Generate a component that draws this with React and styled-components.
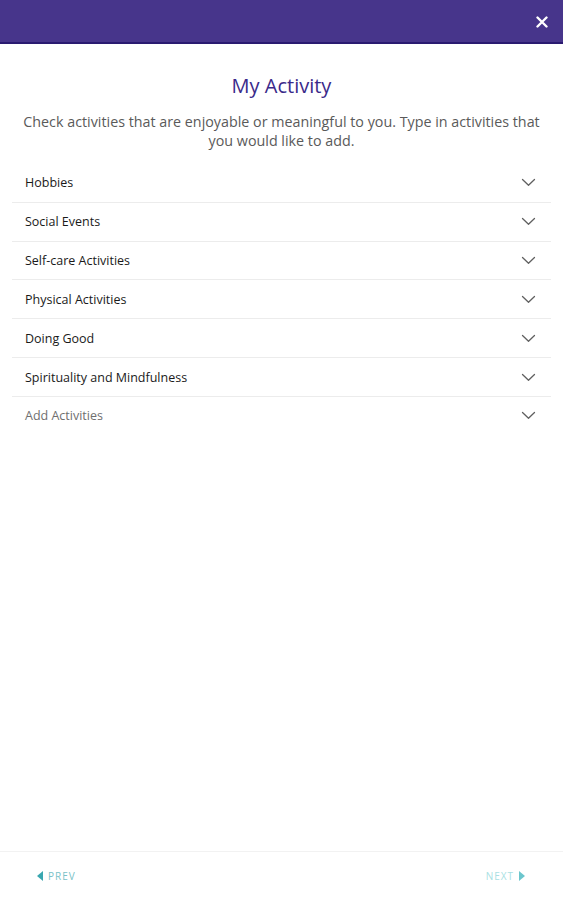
import React from 'react'
import styled, { createGlobalStyle } from 'styled-components'

const GlobalStyle = createGlobalStyle`
  html, body {
    margin: 0;
    padding: 0;
    background: #fff;
    font-family: "Open Sans", "Noto Sans", sans-serif;
  }
`

const categories = [
  'Hobbies',
  'Social Events',
  'Self-care Activities',
  'Physical Activities',
  'Doing Good',
  'Spirituality and Mindfulness',
]

const Chevron = () => (
  <svg width="15" height="9" viewBox="0 0 15 9" fill="none">
    <path d="M1.5 1.5 L7.5 7.3 L13.5 1.5" stroke="#606060" strokeWidth="1.3" strokeLinecap="round" strokeLinejoin="round" />
  </svg>
)

const CloseIcon = () => (
  <svg width="12" height="12" viewBox="0 0 12 12">
    <path d="M1.5 1.5 L10.5 10.5 M10.5 1.5 L1.5 10.5" stroke="#fff" strokeWidth="2.4" strokeLinecap="round" />
  </svg>
)

export default function App() {
  return (
    <Page>
      <GlobalStyle />
      <Header>
        <CloseButton aria-label="close"><CloseIcon /></CloseButton>
      </Header>
      <Main>
        <Title>My Activity</Title>
        <Intro>
          Check activities that are enjoyable or meaningful to you. Type in activities that you would like to add.
        </Intro>
        <List>
          {categories.map((name) => (
            <Row key={name}>
              <RowLabel>{name}</RowLabel>
              <Chevron />
            </Row>
          ))}
          <Row last>
            <RowLabel muted>Add Activities</RowLabel>
            <Chevron />
          </Row>
        </List>
      </Main>
      <Footer>
        <NavButton>
          <Arrow left />
          PREV
        </NavButton>
        <NavButton faded>
          NEXT
          <Arrow />
        </NavButton>
      </Footer>
    </Page>
  )
}

const Page = styled.div`
  display: flex;
  flex-direction: column;
  min-height: 100vh;
`

const Header = styled.header`
  display: flex;
  align-items: center;
  justify-content: flex-end;
  height: 42px;
  background-color: #47358b;
  border-bottom: 2px solid #2a1a70;
  padding: 0 14px;
`

const CloseButton = styled.button`
  display: flex;
  align-items: center;
  justify-content: center;
  background: none;
  border: none;
  padding: 0;
  margin-right: 1px;
  margin-top: 1px;
  cursor: pointer;
`

const Main = styled.main`
  flex: 1;
  display: flex;
  flex-direction: column;
  align-items: center;
  padding-top: 28px;
`

const Title = styled.h1`
  margin: 0;
  font-size: 20px;
  font-weight: 400;
  line-height: 28px;
  color: #3a2a8a;
`

const Intro = styled.p`
  margin: 12px 0 0;
  width: 530px;
  font-size: 14.3px;
  line-height: 19px;
  text-align: center;
  color: #5a5a5a;
`

const List = styled.div`
  align-self: stretch;
  display: flex;
  flex-direction: column;
  margin: 14px 12px 0;
`

const Row = styled.div`
  display: flex;
  align-items: center;
  justify-content: space-between;
  height: 37.83px;
  padding: 0 15px 0 13px;
  border-bottom: 1px solid ${(props) => (props.last ? 'transparent' : '#ececec')};
`

const RowLabel = styled.span`
  font-size: 12.5px;
  color: ${(props) => (props.muted ? '#6f6f6f' : '#1a1a1a')};
`

const Footer = styled.footer`
  display: flex;
  align-items: center;
  justify-content: space-between;
  height: 48px;
  padding: 0 38px 0 37px;
  border-top: 1px solid #f2f2f2;
`

const NavButton = styled.span`
  display: flex;
  align-items: center;
  gap: 5px;
  font-size: 10px;
  letter-spacing: 1px;
  color: ${(props) => (props.faded ? '#a9dfe3' : '#79c2c8')};
`

const Arrow = styled.span`
  width: 0;
  height: 0;
  border-top: 5px solid transparent;
  border-bottom: 5px solid transparent;
  ${(props) => (props.left
    ? 'border-right: 6px solid #3aa7b0;'
    : 'border-left: 6px solid #6cc6cd;')}
`
